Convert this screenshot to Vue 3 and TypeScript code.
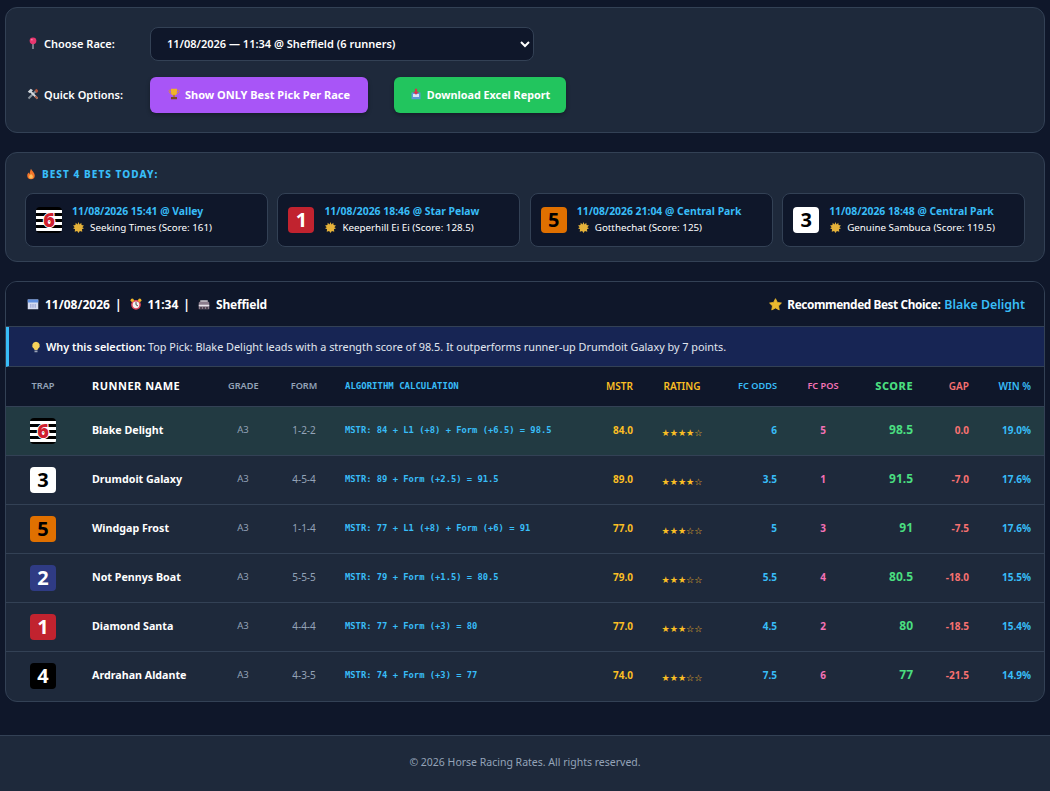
<template>
  <div class="page">
    <section class="panel controls">
      <div class="control-row">
        <label class="control-label">
          <svg class="emoji" viewBox="0 0 16 16"><path d="M8 7v9" stroke="#8f98a3" stroke-width="2" /><circle cx="8" cy="5" r="4.500" fill="#e8366f" /><circle cx="6.500" cy="3.500" r="1" fill="#f7a3bf" /></svg>
          Choose Race:
        </label>
        <select class="race-select">
          <option>11/08/2026 — 11:34 @ Sheffield (6 runners)</option>
        </select>
      </div>
      <div class="control-row">
        <label class="control-label">
          <svg class="emoji" viewBox="0 0 16 16"><path d="M2 14 12 4" stroke="#8b939c" stroke-width="2.600" /><path d="M14 14 5 5" stroke="#d3d7dc" stroke-width="2.400" /><path d="M1 5l4-4 3 2-4 4z" fill="#d3d7dc" /><path d="M10 3l3-2 2 3-2 3z" fill="#b5533c" /><path d="M11 11l3 3" stroke="#a8563f" stroke-width="2.400" /></svg>
          Quick Options:
        </label>
        <div class="buttons">
          <button class="btn btn-purple">
            <svg class="emoji" viewBox="0 0 16 16"><path d="M4 1h8v5a4 4 0 0 1-8 0z" fill="#f0b429" /><path d="M4 3H1.500v2a2.500 2.500 0 0 0 3 2M12 3h2.500v2a2.500 2.500 0 0 1-3 2" fill="none" stroke="#d99a1e" /><path d="M7 9h2v3H7z" fill="#b97a16" /><path d="M4 12h8v3H4z" fill="#7a4a22" /></svg>
            Show ONLY Best Pick Per Race
          </button>
          <button class="btn btn-green">
            <svg class="emoji" viewBox="0 0 16 16"><path d="M2 6h12v9H2z" fill="#5b9bd5" /><path d="M4 8h8v4H4z" fill="#d6e6f5" /><path d="M6.500 1h3v4H12L8 9 4 5h2.500z" fill="#d8344f" /></svg>
            Download Excel Report
          </button>
        </div>
      </div>
    </section>

    <section class="panel best">
      <h3 class="best-title">
        <svg class="emoji" viewBox="0 0 16 16"><path d="M8 1c1 3 5 5 5 9a5 5 0 0 1-10 0c0-2 1-3 2-4 0 1 .5 2 1 2 .5-2 1-5 2-7z" fill="#f4762a" /><path d="M8 8c1 1 2.500 2 2.500 3.500a2.500 2.500 0 0 1-5 0C5.500 10 7 9.500 8 8z" fill="#fbbf5a" /></svg>
        BEST 4 BETS TODAY:
      </h3>
      <div class="best-grid">
        <div v-for="bet in bets" :key="bet.race" class="best-card">
          <span class="trap" :class="'trap-' + bet.trap">{{ bet.trap }}</span>
          <div class="best-text">
            <div class="best-race">{{ bet.race }}</div>
            <div class="best-runner">
              <svg class="sun" viewBox="0 0 16 16">
                <path d="M8 0l1.500 3.500L12 1l.5 3.500L16 5l-2.500 2.500L16 9l-3 1.500.5 3.500-3.500-1L8 16l-2-3-3.500 1 .5-3.500L0 9l2.500-1.500L0 5l3.500-.5L4 1l2.500 2.500z" fill="#e5b23a" />
              </svg>
              {{ bet.runner }} (Score: {{ bet.score }})
            </div>
          </div>
        </div>
      </div>
    </section>

    <section class="race">
      <header class="race-head">
        <div class="race-meta">
          <svg class="emoji" viewBox="0 0 16 16"><path d="M1 2h14v13H1z" fill="#d5dcf0" /><path d="M1 2h14v4H1z" fill="#5f8fe0" /><path d="M4 8h2v5H4zM7 8h2v5H7zM10 8h2v5h-2z" fill="#a9b3da" /></svg>
          <span>11/08/2026</span><span class="sep">|</span>
          <svg class="emoji" viewBox="0 0 16 16"><circle cx="8" cy="9" r="5.500" fill="#f3f0f0" stroke="#e0455a" stroke-width="2" /><path d="M8 5.500V9l2.500 1.500" fill="none" stroke="#333" stroke-width="1.200" /><circle cx="3" cy="3" r="2.200" fill="#f0b429" /><circle cx="13" cy="3" r="2.200" fill="#f0b429" /></svg>
          <span>11:34</span><span class="sep">|</span>
          <svg class="emoji" viewBox="0 0 16 16"><path d="M1 6c3-3 11-3 14 0v9H1z" fill="#8b7c8c" /><path d="M3 3h10v2H3z" fill="#c6c0c8" /><path d="M1 9h14v2H1z" fill="#e8e4ea" /><path d="M3 12h2v3H3zM7 12h2v3H7zM11 12h2v3h-2z" fill="#3d3340" /></svg>
          <span class="venue">Sheffield</span>
        </div>
        <div class="race-pick">
          <svg class="star" viewBox="0 0 16 16"><path d="M8 .8l2.300 4.600 5 .8-3.600 3.500.9 5L8 12.300l-4.600 2.400.9-5L.7 6.200l5-.8z" fill="#eab92f" stroke="#eab92f" stroke-linejoin="round" /></svg>
          <span class="pick-label">Recommended Best Choice:</span>
          <span class="pick-name">Blake Delight</span>
        </div>
      </header>

      <div class="why">
        <svg class="emoji" viewBox="0 0 16 16"><path d="M8 1a5 5 0 0 0-3 9c.6.500 1 1.200 1 2h4c0-.8.400-1.500 1-2a5 5 0 0 0-3-9z" fill="#f6d25a" /><path d="M6 12.500h4V15H6z" fill="#9aa3b5" /></svg>
        <span><strong>Why this selection:</strong> Top Pick: Blake Delight leads with a strength score of 98.5. It outperforms runner-up Drumdoit Galaxy by 7 points.</span>
      </div>

      <table class="runners">
        <colgroup>
          <col v-for="(w, i) in colWidths" :key="i" :style="{ width: w + 'px' }" />
        </colgroup>
        <thead>
          <tr>
            <th class="c">TRAP</th>
            <th class="name-h">RUNNER NAME</th>
            <th class="c">GRADE</th>
            <th class="c">FORM</th>
            <th class="algo algo-h">ALGORITHM CALCULATION</th>
            <th class="r gold wide">MSTR</th>
            <th class="c gold wide">RATING</th>
            <th class="r blue">FC ODDS</th>
            <th class="c pink">FC POS</th>
            <th class="r green score-h">SCORE</th>
            <th class="r red wide">GAP</th>
            <th class="r blue wide last">WIN %</th>
          </tr>
        </thead>
        <tbody>
          <tr v-for="(r, i) in runners" :key="r.name" :class="{ top: i === 0 }">
            <td class="c trap-cell"><span class="trap" :class="'trap-' + r.trap">{{ r.trap }}</span></td>
            <td class="name">{{ r.name }}</td>
            <td class="c muted">A3</td>
            <td class="c muted form">{{ r.form }}</td>
            <td class="algo">{{ r.calc }}</td>
            <td class="r gold b">{{ r.mstr }}</td>
            <td class="c stars">{{ r.stars }}</td>
            <td class="r blue b">{{ r.odds }}</td>
            <td class="c pink b">{{ r.pos }}</td>
            <td class="r green b score">{{ r.score }}</td>
            <td class="r red b">{{ r.gap }}</td>
            <td class="r blue b last">{{ r.win }}</td>
          </tr>
        </tbody>
      </table>
    </section>

    <footer class="foot">© 2026 Horse Racing Rates. All rights reserved.</footer>
  </div>
</template>

<script setup lang="ts">
interface Bet {
  trap: number;
  race: string;
  runner: string;
  score: number;
}

interface Runner {
  trap: number;
  name: string;
  form: string;
  calc: string;
  mstr: string;
  stars: string;
  odds: string;
  pos: number;
  score: string;
  gap: string;
  win: string;
}

const colWidths = [74, 136, 54, 68, 252, 55, 74, 70, 68, 68, 56, 63];

const bets: Bet[] = [
  { trap: 6, race: "11/08/2026 15:41 @ Valley", runner: "Seeking Times", score: 161 },
  { trap: 1, race: "11/08/2026 18:46 @ Star Pelaw", runner: "Keeperhill Ei Ei", score: 128.5 },
  { trap: 5, race: "11/08/2026 21:04 @ Central Park", runner: "Gotthechat", score: 125 },
  { trap: 3, race: "11/08/2026 18:48 @ Central Park", runner: "Genuine Sambuca", score: 119.5 },
];

const runners: Runner[] = [
  { trap: 6, name: "Blake Delight", form: "1-2-2", calc: "MSTR: 84 + L1 (+8) + Form (+6.5) = 98.5", mstr: "84.0", stars: "★★★★☆", odds: "6", pos: 5, score: "98.5", gap: "0.0", win: "19.0%" },
  { trap: 3, name: "Drumdoit Galaxy", form: "4-5-4", calc: "MSTR: 89 + Form (+2.5) = 91.5", mstr: "89.0", stars: "★★★★☆", odds: "3.5", pos: 1, score: "91.5", gap: "-7.0", win: "17.6%" },
  { trap: 5, name: "Windgap Frost", form: "1-1-4", calc: "MSTR: 77 + L1 (+8) + Form (+6) = 91", mstr: "77.0", stars: "★★★☆☆", odds: "5", pos: 3, score: "91", gap: "-7.5", win: "17.6%" },
  { trap: 2, name: "Not Pennys Boat", form: "5-5-5", calc: "MSTR: 79 + Form (+1.5) = 80.5", mstr: "79.0", stars: "★★★☆☆", odds: "5.5", pos: 4, score: "80.5", gap: "-18.0", win: "15.5%" },
  { trap: 1, name: "Diamond Santa", form: "4-4-4", calc: "MSTR: 77 + Form (+3) = 80", mstr: "77.0", stars: "★★★☆☆", odds: "4.5", pos: 2, score: "80", gap: "-18.5", win: "15.4%" },
  { trap: 4, name: "Ardrahan Aldante", form: "4-3-5", calc: "MSTR: 74 + Form (+3) = 77", mstr: "74.0", stars: "★★★☆☆", odds: "7.5", pos: 6, score: "77", gap: "-21.5", win: "14.9%" },
];
</script>

<style>
body {
  background: #0f172a;
}
</style>

<style scoped>
.page {
  min-height: 791px;
  display: flex;
  flex-direction: column;
  font-family: "Noto Sans", "Open Sans", "Liberation Sans", sans-serif;
  color: #fff;
  padding-top: 7px;
  box-sizing: border-box;
}

.panel {
  margin: 0 5px 19px;
  background: #1e293b;
  border: 1px solid #334155;
  border-radius: 12px;
  box-sizing: border-box;
}

.emoji {
  width: 12px;
  height: 12px;
  flex: none;
}

.controls {
  height: 126px;
  padding: 19px 21px;
  display: flex;
  flex-direction: column;
  gap: 16px;
}

.control-row {
  display: flex;
  align-items: center;
}

.control-label {
  width: 123px;
  padding-bottom: 2px;
  font-size: 11px;
  font-weight: 600;
  display: flex;
  align-items: center;
  gap: 5px;
}

.race-select {
  width: 384px;
  height: 34px;
  padding: 0 12px 2px;
  background: #0f172a;
  color: #fff;
  border: 1px solid #334155;
  border-radius: 8px;
  font-family: inherit;
  font-size: 11px;
  font-weight: 600;
}

.buttons {
  display: flex;
  gap: 26px;
}

.btn {
  height: 36px;
  padding: 0 0 2px;
  border: none;
  border-radius: 6px;
  color: #fff;
  font-family: inherit;
  font-size: 11px;
  font-weight: 700;
  white-space: nowrap;
  display: flex;
  align-items: center;
  justify-content: center;
  gap: 5px;
  box-shadow: 0 2px 4px rgba(0, 0, 0, 0.3);
}

.btn-purple {
  background: #a855f7;
  width: 218px;
}

.btn-green {
  background: #22c55e;
  width: 172px;
  font-size: 10.800px;
}

.best {
  height: 110px;
  padding: 14px 19px;
}

.best-title {
  margin: 0 0 12px;
  height: 14px;
  display: flex;
  align-items: center;
  gap: 5px;
  font-size: 10px;
  font-weight: 800;
  letter-spacing: 1.050px;
  color: #38bdf8;
}

.best-grid {
  display: grid;
  grid-template-columns: repeat(4, 1fr);
  gap: 9.500px;
}

.best-card {
  height: 54px;
  box-sizing: border-box;
  padding: 0 10px;
  background: #0f172a;
  border: 1px solid #334155;
  border-radius: 8px;
  display: flex;
  align-items: center;
  gap: 10px;
}

.trap {
  display: inline-flex;
  align-items: center;
  justify-content: center;
  width: 26px;
  height: 26px;
  border-radius: 4px;
  font-family: "Open Sans", sans-serif;
  font-size: 20px;
  font-weight: 700;
  line-height: 1;
  vertical-align: middle;
}

.trap-1 {
  background: #c1232f;
  color: #fff;
}
.trap-2 {
  background: #2f3b84;
  color: #fff;
}
.trap-3 {
  background: #fff;
  color: #000;
}
.trap-4 {
  background: #000;
  color: #fff;
}
.trap-5 {
  background: #e07000;
  color: #000;
}
.trap-6 {
  background: repeating-linear-gradient(180deg, #000 0 3px, #fff 3px 6px);
  color: #d0202f;
  font-weight: 800;
  text-shadow: 1px 0 0 #fff, -1px 0 0 #fff, 0 1px 0 #fff, 0 -1px 0 #fff;
}

.best-text {
  padding-bottom: 2px;
}

.best-race {
  font-size: 10.400px;
  font-weight: 700;
  color: #38bdf8;
  margin-bottom: 3px;
}

.best-runner {
  font-size: 9.800px;
  display: flex;
  align-items: center;
  gap: 6px;
}

.sun {
  margin-left: 1px;
  width: 11px;
  height: 11px;
  flex: none;
}

.race {
  margin: 0 5px;
  height: 421px;
  box-sizing: border-box;
  background: #1e293b;
  border: 1px solid #334155;
  border-radius: 12px;
  overflow: hidden;
}

.race-head {
  height: 45px;
  box-sizing: border-box;
  padding: 0 19px 0 21px;
  background: #0f172a;
  border-bottom: 1px solid #334155;
  display: flex;
  align-items: center;
  justify-content: space-between;
}

.race-meta {
  display: flex;
  align-items: center;
  gap: 6px;
  font-size: 12px;
  font-weight: 700;
}

.venue {
  letter-spacing: -0.200px;
}

.sep {
  color: #fff;
  margin: 0 2px 0 -1px;
}

.race-pick {
  display: flex;
  align-items: center;
  font-size: 11.800px;
  font-weight: 700;
}

.pick-label {
  letter-spacing: -0.400px;
}

.star {
  width: 13px;
  height: 13px;
  margin-right: 5px;
  flex: none;
}

.pick-name {
  color: #38bdf8;
  font-size: 12.400px;
  font-weight: 600;
  margin-left: 4px;
}

.why {
  height: 40px;
  box-sizing: border-box;
  padding-left: 21px;
  background: #172554;
  border-left: 3px solid #38bdf8;
  border-bottom: 1px solid #334155;
  display: flex;
  align-items: center;
  gap: 4px;
  font-size: 10.850px;
  color: #e2e8f0;
}

.why strong {
  font-weight: 600;
  color: #fff;
}

.runners {
  width: 1038px;
  table-layout: fixed;
  border-collapse: collapse;
}

th {
  height: 37px;
  padding: 0 12px 2px;
  background: #0f172a;
  border-bottom: 1px solid #334155;
  font-size: 9.200px;
  font-weight: 600;
  color: #94a3b8;
  white-space: nowrap;
  overflow: visible;
}

td {
  height: 46px;
  padding: 0 12px 2px;
  border-bottom: 1px solid #334155;
  font-size: 10px;
  line-height: 14px;
  white-space: nowrap;
}

td.trap-cell {
  height: 48px;
  padding: 0 12px;
  line-height: 1;
}

tbody tr:last-child td {
  border-bottom: none;
}

.top td {
  background: #223a42;
}

.c {
  text-align: center;
}
.r {
  text-align: right;
}
.b {
  font-weight: 700;
}
.last {
  padding-right: 13px;
}
.muted {
  color: #94a3b8;
  font-size: 9.500px;
}
.form {
  font-size: 10px;
}
.gold {
  color: #fbbf24;
}
.blue {
  color: #38bdf8;
}
.pink {
  color: #f472b6;
}
.green {
  color: #4ade80;
}
.red {
  color: #f87171;
}

th.gold {
  color: #fbbf24;
}
th.blue {
  color: #38bdf8;
}
th.pink {
  color: #f472b6;
}
th.green {
  color: #4ade80;
}
th.red {
  color: #f87171;
}
th.wide {
  font-size: 10px;
}

.name-h {
  text-align: left;
  font-size: 11px;
  font-weight: 700;
  color: #fff;
  letter-spacing: 0.500px;
}

.name {
  font-size: 10.700px;
  font-weight: 700;
}

.algo {
  padding-left: 7px;
  text-align: left;
  font-family: "DejaVu Sans Mono", "Liberation Mono", monospace;
  font-size: 8.800px;
  font-weight: 700;
  color: #38bdf8;
}

th.algo-h {
  color: #38bdf8;
  font-size: 9px;
  font-weight: 700;
}

.score-h {
  font-size: 11px;
  font-weight: 800;
  letter-spacing: 0.500px;
}

.score {
  font-size: 12px;
}

td.stars {
  height: 45px;
  padding: 3px 12px 0;
  font-family: "DejaVu Sans", sans-serif;
  font-size: 9.200px;
  color: #fbbf24;
}

.foot {
  margin-top: 33px;
  padding-bottom: 3px;
  flex: 1;
  display: flex;
  align-items: center;
  justify-content: center;
  background: #1e293b;
  border-top: 1px solid #334155;
  font-size: 10.500px;
  color: #94a3b8;
}
</style>
